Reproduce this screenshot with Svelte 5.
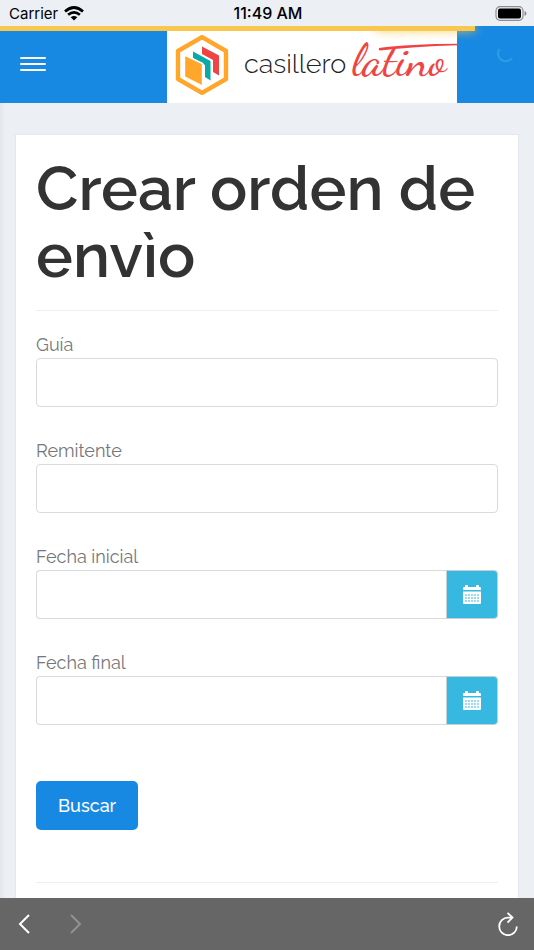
<script lang="ts">
    let guia = $state("");
    let remitente = $state("");
    let fechaInicial = $state("");
    let fechaFinal = $state("");
    let progress = $state(89);
</script>

<svelte:head>
    <title>Crear orden de envìo</title>
</svelte:head>

{#snippet calendar()}
    <svg width="18" height="19" viewBox="0 0 18 19" aria-hidden="true">
        <path fill="#fff" d="M0 5V3q0-1 1-1h1V1q0-1 1-1h1q1 0 1 1v1h8V1q0-1 1-1h1q1 0 1 1v1h1q1 0 1 1v2zM0 6.5h18V18q0 1-1 1H1q-1 0-1-1z" />
        <path
            stroke="#36b8e0"
            stroke-width="1.2"
            stroke-dasharray="2 1"
            d="M2 10h14M2 13h14M2 16h14"
        />
    </svg>
{/snippet}

<div class="app">
    <div class="status">
        <div class="carrier">
            <span>Carrier</span>
            <svg width="20" height="15" viewBox="0 0 20 15" aria-hidden="true">
                <g fill="none" stroke="#000" stroke-width="2.7">
                    <path d="M1 5.4Q10-2.4 19 5.4" />
                    <path d="M4.1 8.8Q10 3.8 15.9 8.8" />
                </g>
                <path d="M10 14.6 6.7 11.3Q10 8.6 13.3 11.3z" />
            </svg>
        </div>
        <span class="time">11:49 AM</span>
        <svg class="battery" width="32" height="15" viewBox="0 0 32 15" aria-hidden="true">
            <rect x="1" y=".7" width="27" height="13.6" rx="4" fill="none" stroke="#8b8d90" stroke-width="1.2" />
            <rect x="3" y="2.5" width="23" height="10" rx="2" />
            <path fill="#8b8d90" d="M29.5 5q2 .8 2 2.5t-2 2.5z" />
        </svg>
    </div>

    <header>
        <div class="progress" style:width="{progress}%"></div>
        <button class="toggle" aria-label="Menú">
            <span></span>
            <span></span>
            <span></span>
        </button>
        <a class="logo" href="/" aria-label="casillero latino">
            <svg width="54" height="62" viewBox="0 0 54 62" aria-hidden="true">
                <path fill="none" stroke="#ffa62b" stroke-width="4.4" stroke-linejoin="round" d="M27 3.2 51 17v28L27 58.8 3 45V17z" />
                <path fill="#ef4444" d="m27 12.5 17 9v20l-6-3.5V26l-11-6z" />
                <path fill="#0aa9a5" d="m18 17.5 17.5 9.5v19.5L30 43V31l-12-7z" />
                <path fill="#ffa62b" stroke="#fff" stroke-width="1.6" d="m9.4 21 18.2 8.6v22.6L9.4 43z" />
            </svg>
            <span class="casillero">casillero</span>
            <span class="latino">
                latino
                <svg class="swoosh" width="80" height="8" viewBox="0 0 80 8" aria-hidden="true">
                    <path fill="#ef4444" d="M1 5Q30 1 80 .8v1.4Q35 3.4 2 7.6 0 7 1 5z" />
                </svg>
            </span>
        </a>
        <div class="loading">
            <svg width="18" height="18" viewBox="0 0 18 18" aria-hidden="true">
                <path fill="none" stroke="#29a0e3" stroke-width="2" d="M3.5 3A7.5 7.5 0 1 0 16 12" />
            </svg>
        </div>
    </header>

    <main>
        <form class="card">
            <h1>Crear orden de envìo</h1>
            <hr />
            <div class="form-group">
                <label for="guia">Guía</label>
                <input id="guia" type="text" bind:value={guia} />
            </div>
            <div class="form-group">
                <label for="remitente">Remitente</label>
                <input id="remitente" type="text" bind:value={remitente} />
            </div>
            <div class="form-group">
                <label for="inicial">Fecha inicial</label>
                <div class="input-group">
                    <input id="inicial" type="text" bind:value={fechaInicial} />
                    <button type="button" class="addon" aria-label="Elegir fecha inicial">
                        {@render calendar()}
                    </button>
                </div>
            </div>
            <div class="form-group">
                <label for="final">Fecha final</label>
                <div class="input-group">
                    <input id="final" type="text" bind:value={fechaFinal} />
                    <button type="button" class="addon" aria-label="Elegir fecha final">
                        {@render calendar()}
                    </button>
                </div>
            </div>
            <button type="button" class="search">Buscar</button>
            <hr />
        </form>
    </main>

    <nav class="toolbar">
        <button aria-label="Atrás">
            <svg width="12" height="20" viewBox="0 0 12 20" aria-hidden="true">
                <path fill="none" stroke="#fff" stroke-width="2" d="M11 1 2 10l9 9" />
            </svg>
        </button>
        <button aria-label="Adelante" disabled>
            <svg width="12" height="20" viewBox="0 0 12 20" aria-hidden="true">
                <path fill="none" stroke="#929295" stroke-width="2" d="m1 1 9 9-9 9" />
            </svg>
        </button>
        <button class="reload" aria-label="Recargar">
            <svg width="20" height="24" viewBox="0 0 20 24" aria-hidden="true">
                <g fill="none" stroke="#fff" stroke-width="1.8">
                    <path d="M14 5.6H10A8.8 8.8 0 1 0 18.8 14.4" />
                    <path d="m9.5.8 5 4.8-5 5" />
                </g>
            </svg>
        </button>
    </nav>
</div>

<style>
    :global(body) {
        margin: 0;
        background-color: #eceff4;
    }

    .app {
        display: flex;
        flex-direction: column;
        height: 100vh;
        font-family: Raleway, Lato, sans-serif;
        color: #76777a;
    }

    button {
        border: none;
        padding: 0;
        font-family: inherit;
    }

    .status {
        display: grid;
        grid-template-columns: 1fr auto 1fr;
        align-items: center;
        height: 26px;
        flex: none;
        padding: 0 7px 0 9px;
        font-family: Inter, sans-serif;
        font-size: 15px;
        color: #000;
    }

    .carrier {
        display: flex;
        align-items: center;
        gap: 6px;
    }

    .time {
        font-size: 16px;
        font-weight: 500;
    }

    .battery {
        justify-self: end;
    }

    header {
        position: relative;
        display: flex;
        align-items: center;
        flex: none;
        height: 77px;
        background-color: #1889e3;
    }

    .progress {
        position: absolute;
        top: 0;
        left: 0;
        z-index: 1;
        height: 5px;
        background-color: #f9c74e;
        clip-path: inset(0 -12px -12px 0);
    }

    .progress::after {
        content: "";
        position: absolute;
        right: 0;
        width: 100px;
        height: 100%;
        box-shadow: 0 0 10px #f9c74e;
    }

    .toggle {
        display: flex;
        flex-direction: column;
        gap: 4px;
        margin-left: 20px;
        padding-bottom: 2px;
        background: none;
    }

    .toggle span {
        width: 26px;
        height: 2px;
        border-radius: 1px;
        background-color: #fff;
    }

    .logo {
        display: flex;
        align-items: center;
        align-self: stretch;
        box-sizing: border-box;
        width: 290px;
        margin-left: auto;
        padding-left: 8px;
        background-color: #fff;
        text-decoration: none;
    }

    .casillero {
        margin-left: 15px;
        padding-bottom: 3px;
        font-size: 27px;
        font-weight: 300;
        color: #222;
    }

    .latino {
        position: relative;
        margin-left: 6px;
        padding-bottom: 8px;
        font-family: "Dancing Script", cursive;
        font-size: 46px;
        font-weight: 500;
        line-height: 48px;
        color: #ef4444;
    }

    .swoosh {
        position: absolute;
        top: 6px;
        left: 26px;
    }

    .loading {
        display: flex;
        justify-content: center;
        box-sizing: border-box;
        width: 77px;
        padding: 0 0 20px 18px;
    }

    main {
        display: flex;
        flex: 1;
        min-height: 0;
        overflow: hidden;
        padding: 31px 15px 0;
        box-shadow: inset 4px 0 4px -2px rgba(0, 0, 0, 0.05);
    }

    .card {
        flex: 1;
        min-width: 0;
        padding: 20px 20px 0;
        border: 1px solid #e4e8ee;
        border-bottom: none;
        background-color: #fff;
    }

    h1 {
        margin: 0;
        font-size: 62px;
        font-weight: 560;
        line-height: 67px;
        color: #333;
    }

    hr {
        margin: 21px 0;
        border: none;
        border-top: 1px solid #eee;
    }

    .form-group {
        margin-bottom: 31px;
    }

    label {
        display: block;
        font-size: 18px;
        line-height: 26px;
    }

    input {
        display: block;
        box-sizing: border-box;
        width: 100%;
        height: 49px;
        padding: 8px 16px;
        border: 1px solid #d9dadb;
        border-radius: 4px;
        background-color: #fff;
        font-family: inherit;
        font-size: 18px;
        color: #555;
    }

    .input-group {
        display: flex;
    }

    .input-group input {
        flex: 1;
        min-width: 0;
        border-right: none;
        border-radius: 4px 0 0 4px;
    }

    .addon {
        display: flex;
        align-items: center;
        justify-content: center;
        box-sizing: border-box;
        width: 52px;
        border: 1px solid #c5ced2;
        border-radius: 0 4px 4px 0;
        background-color: #36b8e0;
    }

    .search {
        height: 49px;
        margin: 25px 0 31px;
        padding: 0 22px;
        border-radius: 5px;
        background-color: #1889e3;
        font-size: 18px;
        font-weight: 500;
        color: #fff;
    }

    .toolbar {
        display: flex;
        align-items: center;
        flex: none;
        gap: 40px;
        height: 52px;
        padding: 0 16px 0 18px;
        background-color: #666;
    }

    .toolbar button {
        display: flex;
        background: none;
    }

    .toolbar .reload {
        margin-left: auto;
    }
</style>
